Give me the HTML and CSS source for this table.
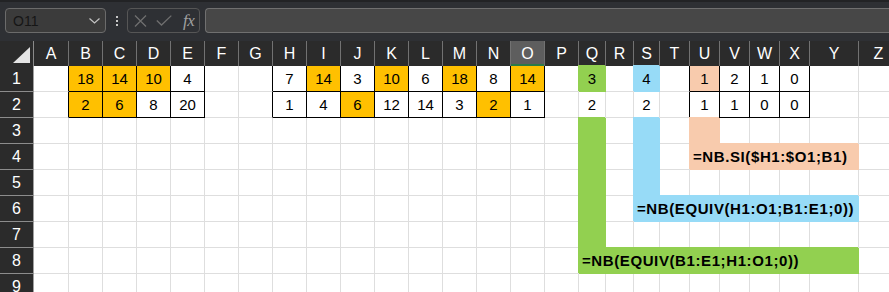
FILE: index.html
```html
<!DOCTYPE html>
<html lang="fr">
<head>
<meta charset="utf-8">
<title>Feuille</title>
<link rel="stylesheet" href="styles.css">
</head>
<body>
<div class="topbar">
  <div class="namebox"><span class="ref">O11</span>
    <svg class="chev" width="11" height="6" viewBox="0 0 11 6"><path d="M0.5 0.5 L5.5 5 L10.5 0.5" fill="none" stroke="#c4c4c4" stroke-width="1.2"/></svg>
  </div>
  <div class="dots"><i></i><i></i><i></i></div>
  <div class="fxgroup">
    <svg width="13" height="12" viewBox="0 0 13 12"><path d="M1 0.5 L12 11.5 M12 0.5 L1 11.5" stroke="#6f6f6f" stroke-width="1.3" fill="none"/></svg>
    <svg width="16" height="11" viewBox="0 0 16 11"><path d="M0.8 5.5 L5.5 10 L15.3 0.6" stroke="#6f6f6f" stroke-width="1.3" fill="none"/></svg>
    <span class="fx">fx</span>
  </div>
  <div class="formula"></div>
</div>
<div class="sheet">
  <div class="corner"></div>
  <div class="ch">A</div><div class="ch">B</div><div class="ch">C</div><div class="ch">D</div><div class="ch">E</div><div class="ch">F</div><div class="ch">G</div><div class="ch">H</div><div class="ch">I</div><div class="ch">J</div><div class="ch">K</div><div class="ch">L</div><div class="ch">M</div><div class="ch">N</div><div class="ch sel">O</div><div class="ch">P</div><div class="ch">Q</div><div class="ch">R</div><div class="ch">S</div><div class="ch">T</div><div class="ch">U</div><div class="ch">V</div><div class="ch">W</div><div class="ch">X</div><div class="ch">Y</div><div class="ch">Z</div>

  <div class="rh">1</div>
  <div class="c lx"></div><div class="c bx or">18</div><div class="c bx or">14</div><div class="c bx or">10</div><div class="c bx">4</div><div class="c"></div><div class="c lx"></div><div class="c bx">7</div><div class="c bx or">14</div><div class="c bx">3</div><div class="c bx or">10</div><div class="c bx">6</div><div class="c bx or">18</div><div class="c bx">8</div><div class="c bx or">14</div><div class="c"></div><div class="c gr">3</div><div class="c"></div><div class="c bl">4</div><div class="c lx"></div><div class="c bx pe">1</div><div class="c bx">2</div><div class="c bx">1</div><div class="c bx">0</div><div class="c"></div><div class="c"></div>

  <div class="rh">2</div>
  <div class="c lx"></div><div class="c bx or">2</div><div class="c bx or">6</div><div class="c bx">8</div><div class="c bx">20</div><div class="c"></div><div class="c lx"></div><div class="c bx">1</div><div class="c bx">4</div><div class="c bx or">6</div><div class="c bx">12</div><div class="c bx">14</div><div class="c bx">3</div><div class="c bx or">2</div><div class="c bx">1</div><div class="c"></div><div class="c">2</div><div class="c"></div><div class="c">2</div><div class="c lx"></div><div class="c bx">1</div><div class="c bx">1</div><div class="c bx">0</div><div class="c bx">0</div><div class="c"></div><div class="c"></div>

  <div class="rh">3</div>
  <div class="c"></div><div class="c"></div><div class="c"></div><div class="c"></div><div class="c"></div><div class="c"></div><div class="c"></div><div class="c"></div><div class="c"></div><div class="c"></div><div class="c"></div><div class="c"></div><div class="c"></div><div class="c"></div><div class="c"></div><div class="c"></div><div class="c gr"></div><div class="c"></div><div class="c bl"></div><div class="c"></div><div class="c pe"></div><div class="c"></div><div class="c"></div><div class="c"></div><div class="c"></div><div class="c"></div>

  <div class="rh">4</div>
  <div class="c"></div><div class="c"></div><div class="c"></div><div class="c"></div><div class="c"></div><div class="c"></div><div class="c"></div><div class="c"></div><div class="c"></div><div class="c"></div><div class="c"></div><div class="c"></div><div class="c"></div><div class="c"></div><div class="c"></div><div class="c"></div><div class="c gr"></div><div class="c"></div><div class="c bl"></div><div class="c"></div><div class="c pe fm span5">=NB.SI($H1:$O1;B1)</div><div class="c"></div>

  <div class="rh">5</div>
  <div class="c"></div><div class="c"></div><div class="c"></div><div class="c"></div><div class="c"></div><div class="c"></div><div class="c"></div><div class="c"></div><div class="c"></div><div class="c"></div><div class="c"></div><div class="c"></div><div class="c"></div><div class="c"></div><div class="c"></div><div class="c"></div><div class="c gr"></div><div class="c"></div><div class="c bl"></div><div class="c"></div><div class="c"></div><div class="c"></div><div class="c"></div><div class="c"></div><div class="c"></div><div class="c"></div>

  <div class="rh">6</div>
  <div class="c"></div><div class="c"></div><div class="c"></div><div class="c"></div><div class="c"></div><div class="c"></div><div class="c"></div><div class="c"></div><div class="c"></div><div class="c"></div><div class="c"></div><div class="c"></div><div class="c"></div><div class="c"></div><div class="c"></div><div class="c"></div><div class="c gr"></div><div class="c"></div><div class="c bl fm span7">=NB(EQUIV(H1:O1;B1:E1;0))</div><div class="c"></div>

  <div class="rh">7</div>
  <div class="c"></div><div class="c"></div><div class="c"></div><div class="c"></div><div class="c"></div><div class="c"></div><div class="c"></div><div class="c"></div><div class="c"></div><div class="c"></div><div class="c"></div><div class="c"></div><div class="c"></div><div class="c"></div><div class="c"></div><div class="c"></div><div class="c gr"></div><div class="c"></div><div class="c"></div><div class="c"></div><div class="c"></div><div class="c"></div><div class="c"></div><div class="c"></div><div class="c"></div><div class="c"></div>

  <div class="rh">8</div>
  <div class="c"></div><div class="c"></div><div class="c"></div><div class="c"></div><div class="c"></div><div class="c"></div><div class="c"></div><div class="c"></div><div class="c"></div><div class="c"></div><div class="c"></div><div class="c"></div><div class="c"></div><div class="c"></div><div class="c"></div><div class="c"></div><div class="c gr fm span9">=NB(EQUIV(B1:E1;H1:O1;0))</div><div class="c"></div>

  <div class="rh">9</div>
  <div class="c"></div><div class="c"></div><div class="c"></div><div class="c"></div><div class="c"></div><div class="c"></div><div class="c"></div><div class="c"></div><div class="c"></div><div class="c"></div><div class="c"></div><div class="c"></div><div class="c"></div><div class="c"></div><div class="c"></div><div class="c"></div><div class="c"></div><div class="c"></div><div class="c"></div><div class="c"></div><div class="c"></div><div class="c"></div><div class="c"></div><div class="c"></div><div class="c"></div><div class="c"></div>
</div>
</body>
</html>
```
FILE: styles.css
```css
html, body {
  margin: 0;
  padding: 0;
  width: 889px;
  height: 292px;
  overflow: hidden;
  background: #ffffff;
  font-family: "Liberation Sans", Arial, sans-serif;
}

.topbar {
  height: 41px;
  box-sizing: border-box;
  border-top: 2px solid #222325;
  background: #2e3034;
  display: flex;
  align-items: flex-start;
  padding: 6px 0 0 5px;
}

.namebox {
  width: 101px;
  height: 25px;
  box-sizing: border-box;
  border: 1px solid #6b6b6b;
  border-radius: 4px;
  background: #3b3b3b;
  display: flex;
  align-items: center;
  justify-content: space-between;
  padding: 0 5px 0 7px;
}

.ref {
  font-size: 14px;
  color: #161616;
}

.chev {
  display: block;
}

.dots {
  width: 3px;
  height: 25px;
  margin-left: 10px;
  display: flex;
  flex-direction: column;
  justify-content: center;
  gap: 2px;
}

.dots i {
  display: block;
  width: 2px;
  height: 2px;
  background: #c8c8c8;
}

.fxgroup {
  width: 73px;
  height: 25px;
  box-sizing: border-box;
  margin-left: 8px;
  border: 1px solid #565656;
  border-radius: 4px;
  display: flex;
  align-items: center;
  padding: 0 0 0 6px;
  gap: 9px;
}

.fxgroup svg {
  display: block;
}

.fx {
  font-family: "Liberation Serif", "Times New Roman", serif;
  font-style: italic;
  font-size: 17px;
  color: #a0a0a0;
  margin-left: 2px;
  letter-spacing: -0.5px;
}

.formula {
  flex: 1;
  height: 25px;
  box-sizing: border-box;
  margin-left: 5px;
  border: 1px solid #707070;
  border-right: none;
  border-radius: 4px 0 0 4px;
  background: #474747;
}

.sheet {
  display: grid;
  grid-template-columns: 34px 35px repeat(15, 34px) 27px 28px 26px 30px 30px 30px 30px 30px 49px 40px;
  grid-template-rows: 25px repeat(9, 26px);
  font-size: 15px;
  color: #000;
}

.corner {
  background: #2b2b2b;
  border-right: 1px solid #8a8a8a;
  display: flex;
  align-items: flex-end;
  justify-content: flex-end;
  padding: 0 3px 3px 0;
}

.corner::after {
  content: "";
  width: 17px;
  height: 16px;
  background: #e4e4e4;
  clip-path: polygon(100% 0, 100% 100%, 0 100%);
}

.ch {
  background: #2b2b2b;
  color: #ffffff;
  border-right: 1px solid #727272;
  display: flex;
  align-items: center;
  justify-content: center;
  font-size: 16px;
}

.ch.sel {
  background: #5e5e5e;
  box-shadow: inset 0 -2px 0 #2b7a47;
}

.rh {
  background: #2b2b2b;
  color: #ffffff;
  border-right: 1px solid #a0a0a0;
  border-bottom: 1px solid #8c8c8c;
  display: flex;
  align-items: center;
  justify-content: center;
  font-size: 16px;
}

.c {
  box-sizing: border-box;
  border-right: 1px solid #dedede;
  border-bottom: 1px solid #dedede;
  display: flex;
  align-items: center;
  justify-content: center;
  white-space: nowrap;
}

.c.lx {
  border-right-color: #000;
}

.c.bx {
  border-right-color: #000;
  border-bottom-color: #000;
}

.c.or {
  background: #ffc000;
}

.c.gr {
  background: #92d050;
  border-color: #92d050;
  box-shadow: -1px -1px 0 0 #92d050;
}

.c.bl {
  background: #97dbf7;
  border-color: #97dbf7;
  box-shadow: -1px -1px 0 0 #97dbf7;
}

.c.pe {
  background: #f8cbad;
  border-color: #f8cbad;
  box-shadow: -1px -1px 0 0 #f8cbad;
}

.c.pe.bx {
  border-color: #000;
  box-shadow: none;
}

.c.fm {
  justify-content: flex-start;
  padding-left: 3px;
  font-weight: bold;
  font-size: 15px;
  letter-spacing: 0.6px;
  overflow: visible;
}

.span5 { grid-column: span 5; }
.span7 { grid-column: span 7; }
.span9 { grid-column: span 9; }
```
